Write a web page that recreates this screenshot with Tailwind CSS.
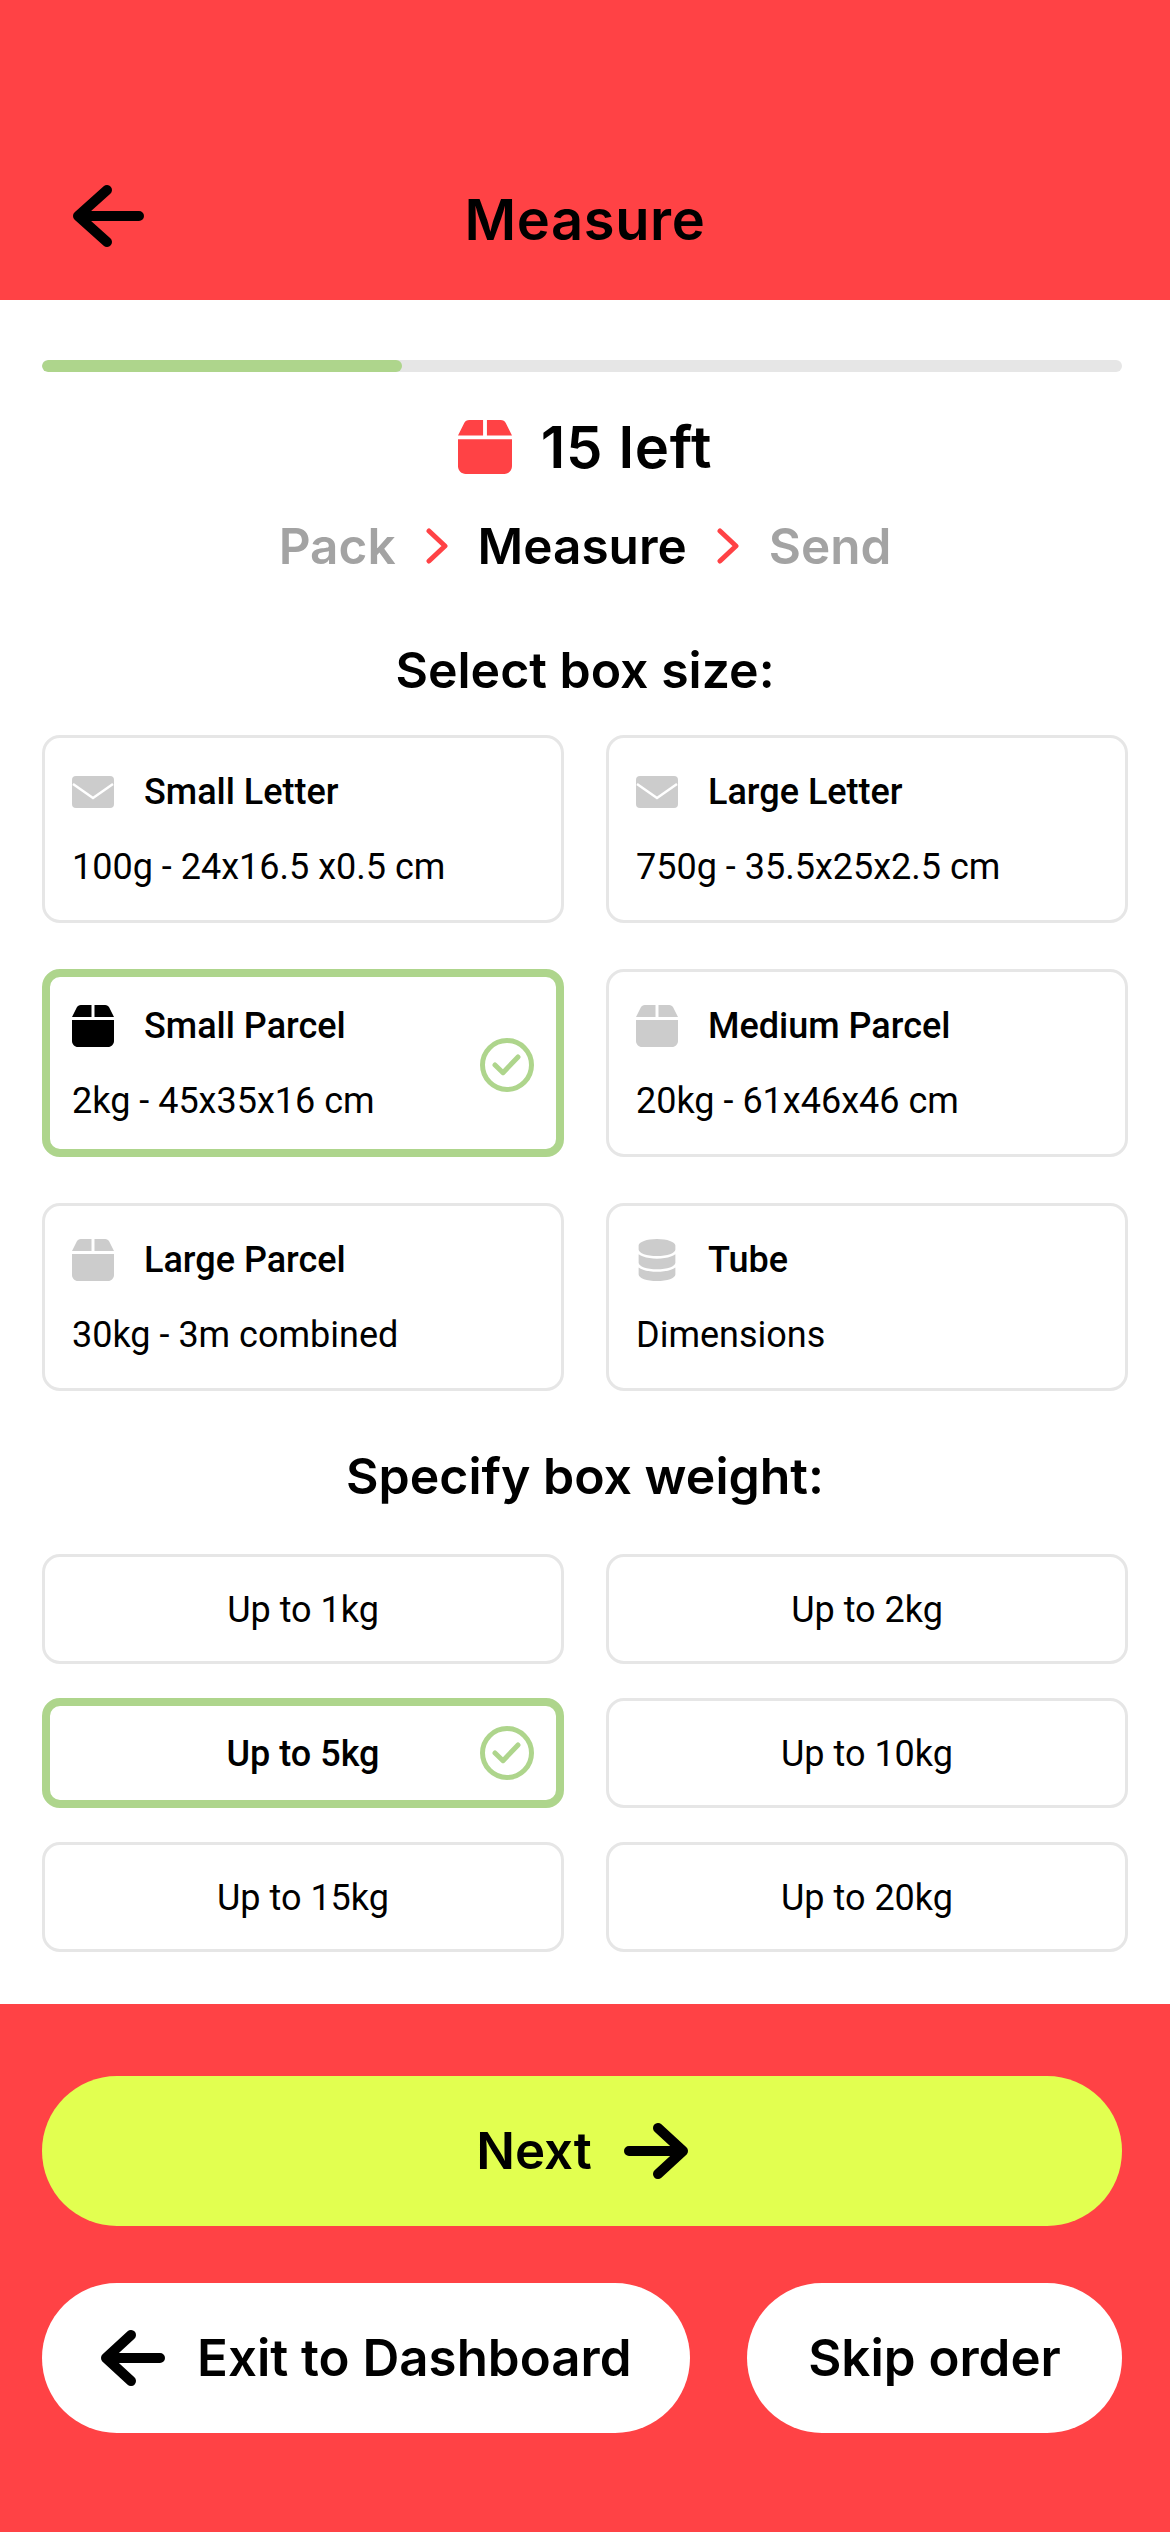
<!DOCTYPE html>
<html lang="en">
	<head>
		<meta charset="utf-8" />
		<meta name="viewport" content="width=device-width, initial-scale=1" />
		<script src="https://cdn.jsdelivr.net/npm/@tailwindcss/browser@4"></script>
		<title>Measure</title>
	</head>

	<body>
		<div class="w-[1170px] h-[2532px] flex flex-col bg-white text-black font-['Roboto',sans-serif]">
			<!-- header -->
			<header class="h-[300px] shrink-0 bg-[#ff4245] grid grid-cols-[1fr_auto_1fr] items-center pt-[152px] pb-[20px]">
				<svg class="ml-[72px] w-[72px] h-[64px]" viewBox="0 0 72 64" fill="none" stroke="#000" stroke-width="10" stroke-linecap="round" stroke-linejoin="round">
					<path d="M67 32H6M35 6 6 32l29 26" />
				</svg>
				<h1 class="mt-[8px] text-[56px] leading-[64px] tracking-[0.6px] font-semibold font-['Inter',sans-serif]">Measure</h1>
				<div></div>
			</header>

			<main class="px-[42px]">
				<div class="mt-[60px] w-[1080px] h-[12px] rounded-full bg-[#e6e6e6] overflow-hidden">
					<div class="w-[360px] h-full rounded-full bg-[#aed58c]"></div>
				</div>

				<div class="mt-[47px] h-[56px] flex items-center justify-center gap-[29px] font-['Inter',sans-serif] font-semibold text-[58px] tracking-[0.8px]">
					<svg class="w-[54px] h-[54px]" viewBox="0 32 448 448" fill="#ff4245"><path d="M50.7 58.5L0 160H208V32H93.7C75.5 32 58.9 42.3 50.7 58.5zM240 160H448L397.3 58.5C389.1 42.3 372.5 32 354.3 32H240V160zM448 192H0V416c0 35.3 28.7 64 64 64H384c35.3 0 64-28.7 64-64V192z" /></svg>
					<span>15 left</span>
				</div>

				<nav class="mt-[41px] h-[60px] flex items-center justify-center gap-[30px] font-['Inter',sans-serif] font-semibold text-[49.5px]">
					<span class="text-[#a3a3a3]">Pack</span>
					<svg class="w-[22px] h-[36px]" viewBox="0 0 22 36" fill="none" stroke="#ff4245" stroke-width="5" stroke-linecap="round" stroke-linejoin="round"><path d="M3 3l16 15L3 33" /></svg>
					<span>Measure</span>
					<svg class="w-[22px] h-[36px]" viewBox="0 0 22 36" fill="none" stroke="#ff4245" stroke-width="5" stroke-linecap="round" stroke-linejoin="round"><path d="M3 3l16 15L3 33" /></svg>
					<span class="text-[#a3a3a3]">Send</span>
				</nav>

				<h2 class="mt-[64px] h-[60px] leading-[60px] text-center text-[50px] font-semibold font-['Inter',sans-serif]">Select box size:</h2>

				<!-- box sizes -->
				<section class="mt-[35px] w-[1086px] grid grid-cols-2 gap-x-[42px] gap-y-[46px]">
					<div class="h-[188px] rounded-[18px] border-[3px] border-[#e6e6e6] pl-[27px] flex flex-col justify-center gap-[33px]">
						<div class="h-[42px] flex items-center gap-[30px]">
							<svg class="w-[42px] h-[32px]" viewBox="0 0 42 32"><rect width="42" height="32" rx="4" fill="#ccc" /><path d="M1 8l20 14L41 8" fill="none" stroke="#fff" stroke-width="2.5" /></svg>
							<span class="text-[36px] leading-[42px] font-medium">Small Letter</span>
						</div>
						<p class="text-[36px] leading-[42px]">100g - 24x16.5 x0.5 cm</p>
					</div>
					<div class="h-[188px] rounded-[18px] border-[3px] border-[#e6e6e6] pl-[27px] flex flex-col justify-center gap-[33px]">
						<div class="h-[42px] flex items-center gap-[30px]">
							<svg class="w-[42px] h-[32px]" viewBox="0 0 42 32"><rect width="42" height="32" rx="4" fill="#ccc" /><path d="M1 8l20 14L41 8" fill="none" stroke="#fff" stroke-width="2.5" /></svg>
							<span class="text-[36px] leading-[42px] font-medium">Large Letter</span>
						</div>
						<p class="text-[36px] leading-[42px]">750g - 35.5x25x2.5 cm</p>
					</div>
					<div class="relative h-[188px] rounded-[18px] border-[8px] border-[#aed58c] pl-[22px] flex flex-col justify-center gap-[33px]">
						<div class="h-[42px] flex items-center gap-[30px]">
							<svg class="w-[42px] h-[42px]" viewBox="0 32 448 448" fill="#000"><path d="M50.7 58.5L0 160H208V32H93.7C75.5 32 58.9 42.3 50.7 58.5zM240 160H448L397.3 58.5C389.1 42.3 372.5 32 354.3 32H240V160zM448 192H0V416c0 35.3 28.7 64 64 64H384c35.3 0 64-28.7 64-64V192z" /></svg>
							<span class="text-[36px] leading-[42px] font-medium">Small Parcel</span>
						</div>
						<p class="text-[36px] leading-[42px]">2kg - 45x35x16 cm</p>
						<svg class="absolute right-[22px] top-[61px] w-[54px] h-[54px]" viewBox="0 0 54 54" fill="none" stroke="#aed58c" stroke-width="5" stroke-linecap="round" stroke-linejoin="round"><circle cx="27" cy="27" r="24.5" /><path d="M15 27l8 7.7L38 19" /></svg>
					</div>
					<div class="h-[188px] rounded-[18px] border-[3px] border-[#e6e6e6] pl-[27px] flex flex-col justify-center gap-[33px]">
						<div class="h-[42px] flex items-center gap-[30px]">
							<svg class="w-[42px] h-[42px]" viewBox="0 32 448 448" fill="#ccc"><path d="M50.7 58.5L0 160H208V32H93.7C75.5 32 58.9 42.3 50.7 58.5zM240 160H448L397.3 58.5C389.1 42.3 372.5 32 354.3 32H240V160zM448 192H0V416c0 35.3 28.7 64 64 64H384c35.3 0 64-28.7 64-64V192z" /></svg>
							<span class="text-[36px] leading-[42px] font-medium">Medium Parcel</span>
						</div>
						<p class="text-[36px] leading-[42px]">20kg - 61x46x46 cm</p>
					</div>
					<div class="h-[188px] rounded-[18px] border-[3px] border-[#e6e6e6] pl-[27px] flex flex-col justify-center gap-[33px]">
						<div class="h-[42px] flex items-center gap-[30px]">
							<svg class="w-[42px] h-[42px]" viewBox="0 32 448 448" fill="#ccc"><path d="M50.7 58.5L0 160H208V32H93.7C75.5 32 58.9 42.3 50.7 58.5zM240 160H448L397.3 58.5C389.1 42.3 372.5 32 354.3 32H240V160zM448 192H0V416c0 35.3 28.7 64 64 64H384c35.3 0 64-28.7 64-64V192z" /></svg>
							<span class="text-[36px] leading-[42px] font-medium">Large Parcel</span>
						</div>
						<p class="text-[36px] leading-[42px]">30kg - 3m combined</p>
					</div>
					<div class="h-[188px] rounded-[18px] border-[3px] border-[#e6e6e6] pl-[27px] flex flex-col justify-center gap-[33px]">
						<div class="h-[42px] flex items-center gap-[30px]">
							<svg class="w-[42px] h-[42px]" viewBox="-18 0 484 512" fill="#ccc"><path d="M448 80v48c0 44.2-100.3 80-224 80S0 172.2 0 128V80C0 35.8 100.3 0 224 0S448 35.8 448 80zM393.2 214.7c20.8-7.4 39.9-16.9 54.8-28.6V288c0 44.2-100.3 80-224 80S0 332.2 0 288V186.1c14.9 11.8 34 21.2 54.8 28.6C99.7 230.7 159.5 240 224 240s124.3-9.3 169.2-25.3zM0 346.1c14.9 11.8 34 21.2 54.8 28.6C99.7 390.7 159.5 400 224 400s124.3-9.3 169.2-25.3c20.8-7.4 39.9-16.9 54.8-28.6V432c0 44.2-100.3 80-224 80S0 476.2 0 432V346.1z" /></svg>
							<span class="text-[36px] leading-[42px] font-medium">Tube</span>
						</div>
						<p class="text-[36px] leading-[42px]">Dimensions</p>
					</div>
				</section>

				<h2 class="mt-[55px] h-[60px] leading-[60px] text-center text-[50px] font-semibold font-['Inter',sans-serif]">Specify box weight:</h2>

				<!-- box weights -->
				<section class="mt-[48px] w-[1086px] grid grid-cols-2 gap-x-[42px] gap-y-[34px] text-[36px]">
					<div class="h-[110px] pt-[2px] rounded-[18px] border-[3px] border-[#e6e6e6] flex items-center justify-center">Up to 1kg</div>
					<div class="h-[110px] pt-[2px] rounded-[18px] border-[3px] border-[#e6e6e6] flex items-center justify-center">Up to 2kg</div>
					<div class="relative h-[110px] pt-[2px] rounded-[18px] border-[8px] border-[#aed58c] flex items-center justify-center font-medium">
						Up to 5kg
						<svg class="absolute right-[22px] top-[20px] w-[54px] h-[54px]" viewBox="0 0 54 54" fill="none" stroke="#aed58c" stroke-width="5" stroke-linecap="round" stroke-linejoin="round"><circle cx="27" cy="27" r="24.5" /><path d="M15 27l8 7.7L38 19" /></svg>
					</div>
					<div class="h-[110px] pt-[2px] rounded-[18px] border-[3px] border-[#e6e6e6] flex items-center justify-center">Up to 10kg</div>
					<div class="h-[110px] pt-[2px] rounded-[18px] border-[3px] border-[#e6e6e6] flex items-center justify-center">Up to 15kg</div>
					<div class="h-[110px] pt-[2px] rounded-[18px] border-[3px] border-[#e6e6e6] flex items-center justify-center">Up to 20kg</div>
				</section>
			</main>

			<!-- footer -->
			<footer class="mt-[52px] flex-1 bg-[#ff4245] pl-[42px] pt-[72px] font-['Inter',sans-serif] font-semibold text-[51px]">
				<button class="w-[1080px] h-[150px] rounded-full bg-[#e2ff50] flex items-center justify-center gap-[32px]">
					Next
					<svg class="w-[64px] h-[56px]" viewBox="0 0 64 56" fill="none" stroke="#000" stroke-width="10" stroke-linecap="round" stroke-linejoin="round"><path d="M5 28h54M34 5l25 23-25 23" /></svg>
				</button>
				<div class="mt-[57px] w-[1080px] flex gap-[57px]">
					<button class="w-[648px] h-[150px] rounded-full bg-white flex items-center pl-[59px] gap-[32px]">
						<svg class="w-[64px] h-[56px]" viewBox="0 0 64 56" fill="none" stroke="#000" stroke-width="10" stroke-linecap="round" stroke-linejoin="round"><path d="M59 28H5M30 5 5 28l25 23" /></svg>
						Exit to Dashboard
					</button>
					<button class="flex-1 h-[150px] rounded-full bg-white flex items-center justify-center">Skip order</button>
				</div>
			</footer>
		</div>
	</body>
</html>
